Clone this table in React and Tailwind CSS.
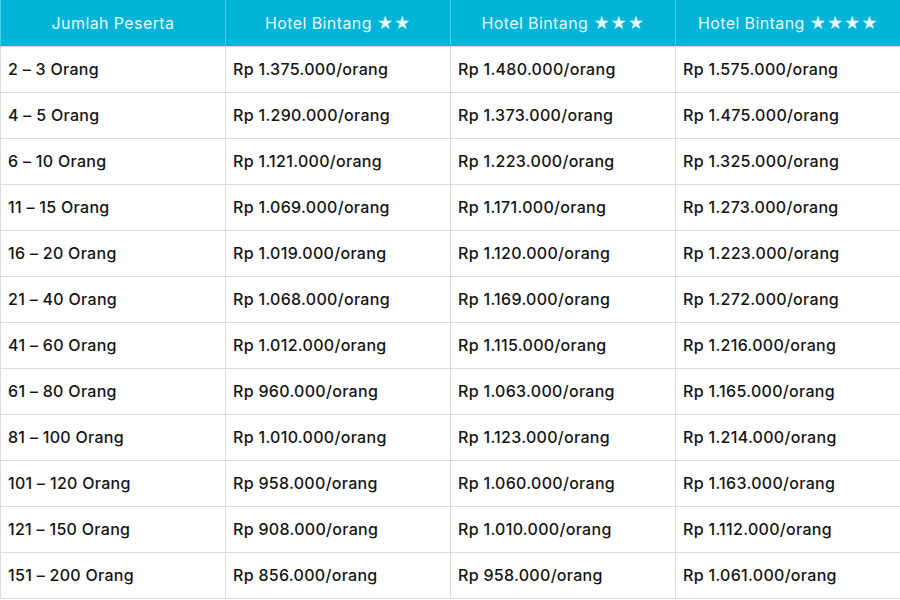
import React from 'react';

const headers = ['Jumlah Peserta', 'Hotel Bintang ★★', 'Hotel Bintang ★★★', 'Hotel Bintang ★★★★'];

const rows = [
  ['2 – 3 Orang', '1.375.000', '1.480.000', '1.575.000'],
  ['4 – 5 Orang', '1.290.000', '1.373.000', '1.475.000'],
  ['6 – 10 Orang', '1.121.000', '1.223.000', '1.325.000'],
  ['11 – 15 Orang', '1.069.000', '1.171.000', '1.273.000'],
  ['16 – 20 Orang', '1.019.000', '1.120.000', '1.223.000'],
  ['21 – 40 Orang', '1.068.000', '1.169.000', '1.272.000'],
  ['41 – 60 Orang', '1.012.000', '1.115.000', '1.216.000'],
  ['61 – 80 Orang', '960.000', '1.063.000', '1.165.000'],
  ['81 – 100 Orang', '1.010.000', '1.123.000', '1.214.000'],
  ['101 – 120 Orang', '958.000', '1.060.000', '1.163.000'],
  ['121 – 150 Orang', '908.000', '1.010.000', '1.112.000'],
  ['151 – 200 Orang', '856.000', '958.000', '1.061.000'],
];

function App() {
  return (
    <div className="w-[900px] h-[600px] bg-white overflow-hidden" style={{ fontFamily: 'Inter, sans-serif' }}>
      <table className="w-[900px] border-collapse table-fixed">
        <thead>
          <tr className="bg-[#00b4d8] h-[46px]">
            {headers.map((h, i) => (
              <th
                key={i}
                className="w-[225px] border-x border-[#4fcbe4] text-center text-[16px] font-normal tracking-[0.4px] text-[#e6f8fc] px-2"
              >
                {h}
              </th>
            ))}
          </tr>
        </thead>
        <tbody>
          {rows.map((r, i) => (
            <tr key={i} className="h-[46px]">
              <td className="border border-[#dcdcdc] pl-[7px] text-[16px] font-medium tracking-[0.3px] text-[#141414]">{r[0]}</td>
              {r.slice(1).map((p, j) => (
                <td key={j} className="border border-[#dcdcdc] pl-[7px] text-[16px] font-medium tracking-[0.3px] text-[#141414]">
                  Rp {p}/orang
                </td>
              ))}
            </tr>
          ))}
        </tbody>
      </table>
    </div>
  );
}

export default App;
